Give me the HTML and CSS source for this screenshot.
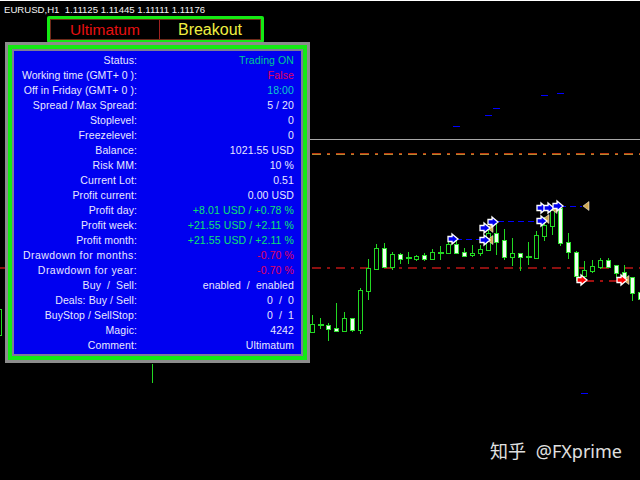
FILE: index.html
```html
<!DOCTYPE html>
<html lang="zh">
<head>
<meta charset="utf-8">
<title>EURUSD,H1</title>
<link rel="stylesheet" href="styles.css">
</head>
<body>
<main class="terminal">
  <svg class="chart" width="640" height="480" viewBox="0 0 640 480" aria-hidden="true">
    <defs>
      <path id="arrow" d="M-1 -5L5 0L-1 5V2.500H-5V-2.500H-1Z"/>
      <path id="flag" d="M-3 0L3 -4.500V4.500Z"/>
    </defs>
    <path class="line grid" d="M310 139.500H640"/>
    <path class="line stop-top" d="M312 153.500H640"/>
    <path class="line stop-bottom" d="M312 154.500H640"/>
    <path class="line level" d="M0 268H640"/>
    <path class="line ticks" d="M453 126.500H460M485 115.500H492M493 108.500H500M541 95.500H548M557 93.500H564M581 393.500H588"/>
    <path class="line wicks" d="M152.500 364V383M312.500 315V333M320.500 318V329M328.500 323V341M336.500 303V332M344.500 312V332M352.500 318V332M360.500 288V334M368.500 259V300M376.500 244V269M384.500 243V268M392.500 252V270M400.500 253V264M408.500 252V264M416.500 255V261M424.500 253V261M432.500 249V260M440.500 246V260M448.500 240V253M456.500 240V254M464.500 248V257M472.500 245V257M480.500 245V256M488.500 229V250M496.500 223V255M504.500 229V260M512.500 238V266M520.500 253V271M528.500 242V265M536.500 231V259M544.500 217V241M552.500 210V235M560.500 205V246M568.500 233V259M576.500 251V281M584.500 261V279M592.500 260V273M600.500 258V269M608.500 258V268M616.500 265V278M624.500 265V278M632.500 277V301"/>
    <path class="hollow" d="M-4.500 309.500H1.500V335.500H-4.500ZM310.500 324.500H314.500V332.500H310.500ZM342.500 318.500H346.500V331.500H342.500ZM358.500 290.500H362.500V330.500H358.500ZM366.500 268.500H370.500V291.500H366.500ZM374.500 248.500H378.500V269.500H374.500ZM390.500 254.500H394.500V267.500H390.500ZM414.500 256.500H418.500V259.500H414.500ZM430.500 252.500H434.500V259.500H430.500ZM446.500 244.500H450.500V253.500H446.500ZM470.500 253.500H474.500V255.500H470.500ZM478.500 249.500H482.500V253.500H478.500ZM486.500 233.500H490.500V250.500H486.500ZM510.500 253.500H514.500V257.500H510.500ZM534.500 235.500H538.500V258.500H534.500ZM542.500 225.500H546.500V236.500H542.500ZM550.500 210.500H554.500V226.500H550.500ZM582.500 270.500H586.500V276.500H582.500ZM590.500 266.500H594.500V271.500H590.500ZM598.500 260.500H602.500V267.500H598.500Z"/>
    <path class="filled" d="M326.500 325.500H330.500V329.500H326.500ZM334.500 328.500H338.500V331.500H334.500ZM350.500 318.500H354.500V330.500H350.500ZM382.500 248.500H386.500V267.500H382.500ZM398.500 254.500H402.500V259.500H398.500ZM422.500 255.500H426.500V259.500H422.500ZM454.500 244.500H458.500V253.500H454.500ZM462.500 252.500H466.500V256.500H462.500ZM494.500 233.500H498.500V242.500H494.500ZM502.500 240.500H506.500V257.500H502.500ZM518.500 253.500H522.500V257.500H518.500ZM558.500 208.500H562.500V243.500H558.500ZM566.500 242.500H570.500V252.500H566.500ZM574.500 252.500H578.500V276.500H574.500ZM606.500 260.500H610.500V267.500H606.500ZM614.500 265.500H618.500V273.500H614.500ZM622.500 272.500H626.500V278.500H622.500ZM630.500 277.500H634.500V293.500H630.500ZM638.500 292.500H642.500V299.500H638.500Z"/>
    <path class="doji" d="M318 324.500H323V325.500H318ZM406 257.500H411V258.500H406ZM438 252.500H443V253H438ZM526 256.500H531V257.500H526Z"/>
    <path class="line link-blue" d="M456 239.500H482M498 221.500H537M560 206.500H582"/>
    <path class="line link-red" d="M585 281H617"/>
    <g class="flags">
      <use href="#flag" x="490" y="228"/>
      <use href="#flag" x="490" y="240"/>
      <use href="#flag" x="554" y="209"/>
      <use href="#flag" x="546" y="219"/>
      <use href="#flag" x="586" y="206"/>
      <use href="#flag" x="626" y="280"/>
    </g>
    <g class="buy">
      <use href="#arrow" x="453" y="239"/>
      <use href="#arrow" x="493" y="222"/>
      <use href="#arrow" x="485" y="228"/>
      <use href="#arrow" x="485" y="240"/>
      <use href="#arrow" x="542" y="208"/>
      <use href="#arrow" x="549" y="208"/>
      <use href="#arrow" x="558" y="206"/>
      <use href="#arrow" x="542" y="221"/>
    </g>
    <g class="sell">
      <use href="#arrow" x="582" y="280"/>
      <use href="#arrow" x="622" y="280"/>
    </g>
  </svg>

  <header class="quote">EURUSD,H1&nbsp; 1.11125 1.11445 1.11111 1.11176</header>

  <nav class="tabs">
    <div class="tabs-inner">
      <span class="tab tab-red">Ultimatum</span>
      <span class="tab tab-yellow">Breakout</span>
    </div>
  </nav>

  <section class="panel">
    <div class="panel-green">
      <div class="panel-gray">
        <dl class="stats">
          <dt>Status:</dt><dd class="c-green">Trading ON</dd>
          <dt class="tight">Working time (GMT+ 0 ):</dt><dd class="c-red">False</dd>
          <dt>Off in Friday (GMT+ 0 ):</dt><dd class="c-teal">18:00</dd>
          <dt>Spread / Max Spread:</dt><dd>5 / 20</dd>
          <dt>Stoplevel:</dt><dd>0</dd>
          <dt>Freezelevel:</dt><dd>0</dd>
          <dt>Balance:</dt><dd>1021.55 USD</dd>
          <dt>Risk MM:</dt><dd>10 %</dd>
          <dt>Current Lot:</dt><dd>0.51</dd>
          <dt>Profit current:</dt><dd>0.00 USD</dd>
          <dt>Profit day:</dt><dd class="c-profit">+8.01 USD / +0.78 %</dd>
          <dt>Profit week:</dt><dd class="c-profit">+21.55 USD / +2.11 %</dd>
          <dt>Profit month:</dt><dd class="c-profit">+21.55 USD / +2.11 %</dd>
          <dt class="wide">Drawdown for months:</dt><dd class="c-red">-0.70 %</dd>
          <dt class="wide">Drawdown for year:</dt><dd class="c-red">-0.70 %</dd>
          <dt>Buy &nbsp;/ &nbsp;Sell:</dt><dd>enabled &nbsp;/ &nbsp;enabled</dd>
          <dt>Deals: Buy / Sell:</dt><dd>0 &nbsp;/ &nbsp;0</dd>
          <dt>BuyStop / SellStop:</dt><dd>0 &nbsp;/ &nbsp;1</dd>
          <dt>Magic:</dt><dd>4242</dd>
          <dt>Comment:</dt><dd>Ultimatum</dd>
        </dl>
      </div>
    </div>
  </section>

  <p class="watermark">知乎 @FXprime</p>
</main>
</body>
</html>
```

FILE: styles.css
```css
* {
  box-sizing: border-box;
}

html,
body {
  margin: 0;
  padding: 0;
  background: #000;
}

.terminal {
  position: relative;
  width: 640px;
  height: 480px;
  overflow: hidden;
  background: #000;
  border-top: 1px solid #fff;
  font-family: "Liberation Sans", Arial, sans-serif;
}

.chart {
  position: absolute;
  left: 0;
  top: -1px;
  shape-rendering: crispEdges;
}

.line {
  fill: none;
}

.grid { stroke: #a8a8a8; }
.stop-top { stroke: #c03a10; stroke-dasharray: 9 6 3 6; }
.stop-bottom { stroke: #b08830; stroke-dasharray: 9 6 3 6; }
.level { stroke: #8c1010; stroke-width: 2; stroke-dasharray: 9 6 3 6; }
.ticks { stroke: #0000ff; }
.wicks { stroke: #22d822; }
.hollow { fill: #000; stroke: #22d822; }
.filled { fill: #f0fff0; stroke: #30e030; }
.doji { fill: #22d822; stroke: #22d822; }
.link-blue { stroke: #0000ff; stroke-dasharray: 6 4; }
.link-red { stroke: #a01010; stroke-width: 2; stroke-dasharray: 9 6 3 6; }

.flags {
  fill: #d0a850;
  stroke: #fff;
  stroke-width: 0.5;
  shape-rendering: geometricPrecision;
}

.buy,
.sell {
  stroke: #fff;
  stroke-width: 1.300;
  shape-rendering: geometricPrecision;
}

.buy { fill: #0000f0; }
.sell { fill: #ff0000; }

.quote {
  position: absolute;
  left: 4px;
  top: 2px;
  color: #f4f4f4;
  font-size: 9.600px;
  line-height: 13px;
  white-space: nowrap;
}

.tabs {
  position: absolute;
  left: 47px;
  top: 15px;
  width: 217px;
  height: 27px;
  padding: 3px;
  background: #14ea14;
  border-radius: 2px;
}

.tabs-inner {
  display: grid;
  grid-template-columns: 109px 1fr;
  height: 100%;
  background: #000;
  border: 1px solid #6e2a1a;
}

.tab {
  display: flex;
  align-items: center;
  justify-content: center;
  font-size: 16px;
}

.tab-red {
  color: #e81010;
  border-right: 1px solid #a02020;
  font-size: 15.500px;
}

.tab-yellow {
  color: #f0f040;
}

.panel {
  position: absolute;
  left: 5px;
  top: 41px;
  width: 305px;
  height: 321px;
  padding: 3px;
  background: #8c8c8c;
}

.panel-green {
  height: 100%;
  padding: 4px;
  background: #14ea14;
}

.panel-gray {
  height: 100%;
  padding: 2px;
  background: #7d7d96;
}

.stats {
  display: grid;
  grid-template-columns: 123px 1fr;
  grid-auto-rows: 15px;
  align-content: start;
  height: 100%;
  margin: 0;
  padding: 1.500px 7px 0 0;
  background: #0000f0;
  color: #e8e8ff;
  font-size: 10.500px;
  letter-spacing: 0.100px;
  line-height: 15px;
  white-space: nowrap;
}

.stats dt,
.stats dd {
  margin: 0;
  text-align: right;
}

.stats .tight { letter-spacing: 0; }
.stats .wide { letter-spacing: 0.450px; }

.c-green { color: #00c890; }
.c-profit { color: #10e070; }
.c-teal { color: #10c8c8; }
.c-red { color: #e00060; }

.watermark {
  position: absolute;
  right: 18px;
  top: 437px;
  margin: 0;
  color: #e0e0e0;
  font-family: "Noto Sans", "Noto Sans CJK SC", sans-serif;
  font-size: 18px;
  line-height: 26px;
  word-spacing: 5px;
  white-space: nowrap;
}
```
